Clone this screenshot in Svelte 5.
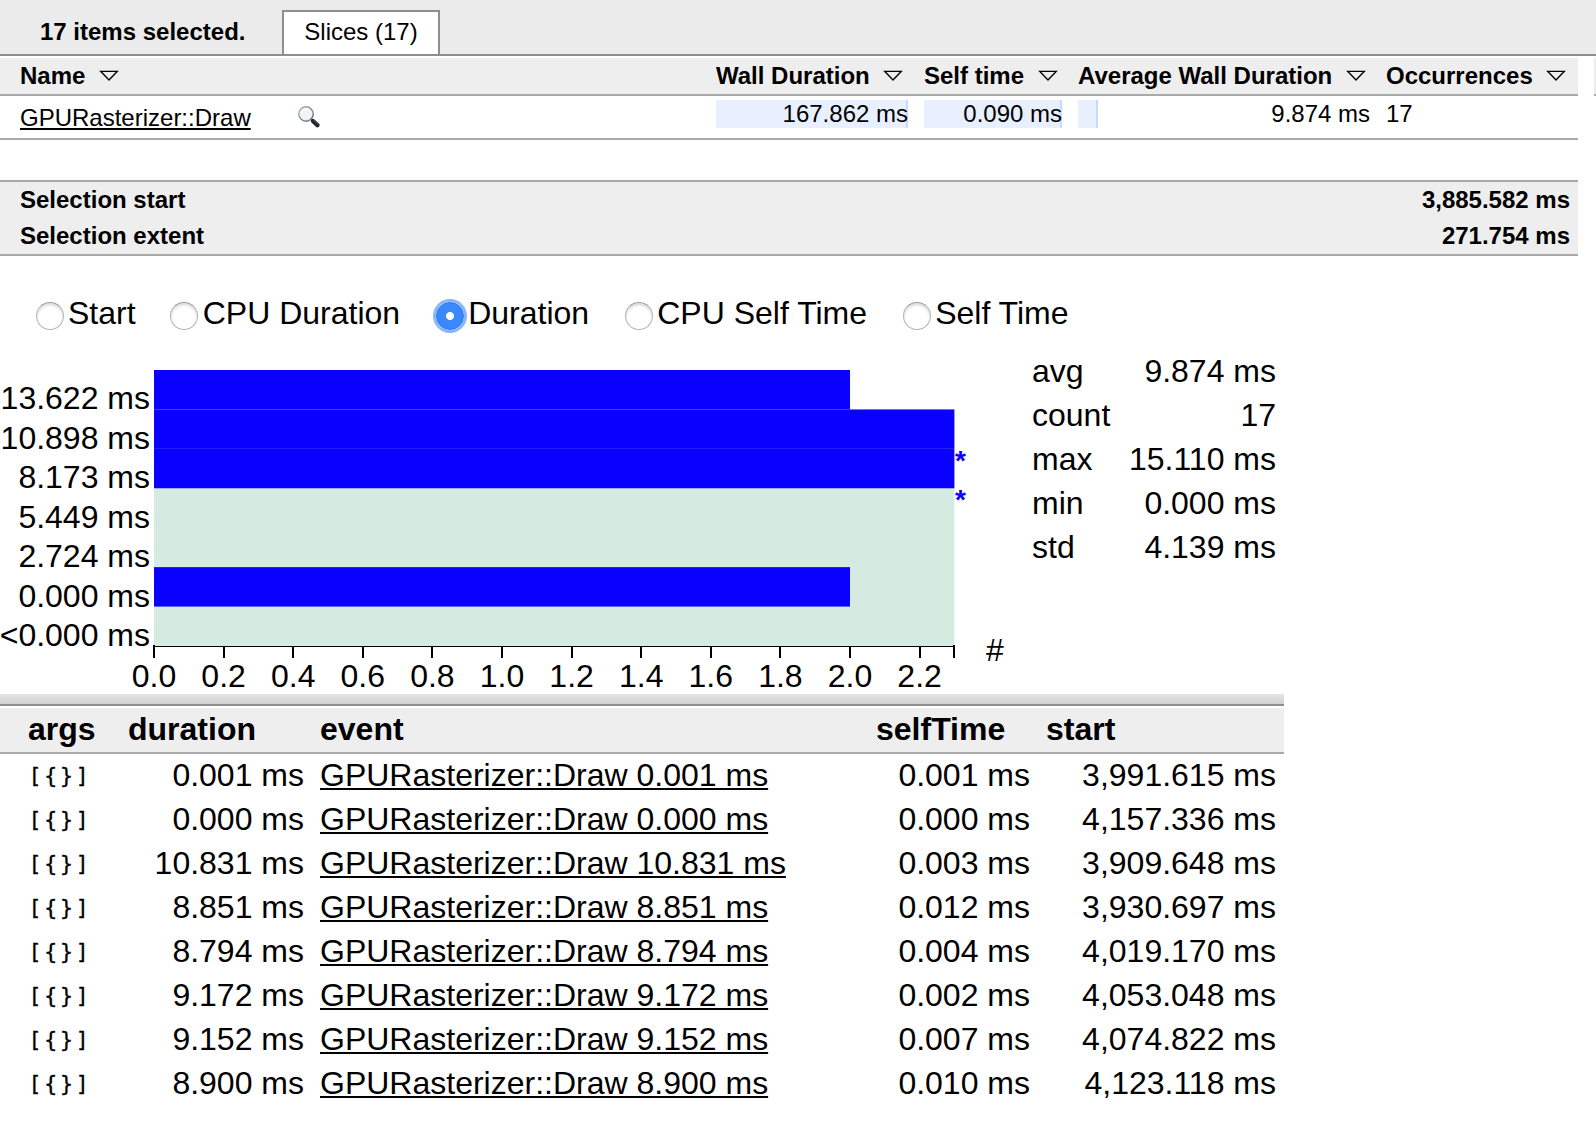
<script lang="ts">
  const headers = ['Name', 'Wall Duration', 'Self time', 'Average Wall Duration', 'Occurrences'];

  const metrics = ['Start', 'CPU Duration', 'Duration', 'CPU Self Time', 'Self Time'];
  let selected = 'Duration';

  const stats = [
    ['avg', '9.874 ms'],
    ['count', '17'],
    ['max', '15.110 ms'],
    ['min', '0.000 ms'],
    ['std', '4.139 ms']
  ];

  // value is the bar length in axis units, over marks a clipped bar
  const bins = [
    { label: '13.622 ms', value: 2, over: false },
    { label: '10.898 ms', value: 2.3, over: true },
    { label: '8.173 ms', value: 2.3, over: true },
    { label: '5.449 ms', value: 0, over: false },
    { label: '2.724 ms', value: 0, over: false },
    { label: '0.000 ms', value: 2, over: false },
    { label: '<0.000 ms', value: 0, over: false }
  ];

  const left = 154;
  const top = 370;
  const unit = 348;
  const step = 39.43;
  const max = 2.3;
  const ticks = Array.from({ length: 12 }, (_, i) => i * 0.2);

  const events = [
    { duration: '0.001 ms', self: '0.001 ms', start: '3,991.615 ms' },
    { duration: '0.000 ms', self: '0.000 ms', start: '4,157.336 ms' },
    { duration: '10.831 ms', self: '0.003 ms', start: '3,909.648 ms' },
    { duration: '8.851 ms', self: '0.012 ms', start: '3,930.697 ms' },
    { duration: '8.794 ms', self: '0.004 ms', start: '4,019.170 ms' },
    { duration: '9.172 ms', self: '0.002 ms', start: '4,053.048 ms' },
    { duration: '9.152 ms', self: '0.007 ms', start: '4,074.822 ms' },
    { duration: '8.900 ms', self: '0.010 ms', start: '4,123.118 ms' }
  ];
</script>

<div class="analysis">
  <div class="tab-strip">
    <span class="tab-label">17 items selected.</span>
    <div class="tab">Slices (17)</div>
  </div>

  <div class="upper">
    <div class="summary">
      <div class="grid head">
        {#each headers as header}
          <div class="th">
            {header}
            <svg class="arrow" width="20" height="12" viewBox="0 0 20 12">
              <path d="M1.8 1.4H18.2L10 9.9Z" fill="none" stroke="#000" stroke-width="1.4" />
            </svg>
          </div>
        {/each}
      </div>

      <div class="grid row">
        <div class="name">
          <span class="link">GPURasterizer::Draw</span>
          <svg class="lens" width="24" height="24" viewBox="0 0 24 24">
            <defs>
              <linearGradient id="rim" x1="0" y1="0" x2="1" y2="1">
                <stop offset="0" stop-color="#9dbbd0" />
                <stop offset="1" stop-color="#666" />
              </linearGradient>
            </defs>
            <path d="M14 14L16 16" stroke="#777" stroke-width="2" />
            <path d="M16 16L20.4 20.2" stroke="#202426" stroke-width="4.4" stroke-linecap="round" />
            <path d="M16.6 15L20.8 19" stroke="#6b7074" stroke-width="0.8" />
            <circle cx="9" cy="9" r="7.2" fill="#f1f3f4" stroke="url(#rim)" stroke-width="1.4" />
            <path d="M4.5 8A5 5 0 0 1 12 4.8" fill="none" stroke="#fff" stroke-width="1.5" />
          </svg>
        </div>
        <div class="value full">167.862 ms</div>
        <div class="value full">0.090 ms</div>
        <div class="value part">9.874 ms</div>
        <div class="value count">17</div>
      </div>

      <div class="selection">
        <div><span>Selection start</span><span>3,885.582 ms</span></div>
        <div><span>Selection extent</span><span>271.754 ms</span></div>
      </div>
    </div>
    <div class="next-column"></div>
  </div>

  <div class="metrics">
    {#each metrics as metric}
      <label>
        <input type="radio" name="metric" value={metric} bind:group={selected} />
        <span>{metric}</span>
      </label>
    {/each}
  </div>

  <div class="middle">
    <svg class="chart" width="1032" height="344" viewBox="0 350 1032 344">
      <rect x={left} y={top + 3 * step} width={max * unit} height={4 * step} fill="#d5ebe2" />
      {#each bins as bin, i}
        {#if bin.value}
          <rect x={left} y={top + i * step} width={bin.value * unit} height={step} fill="#0a00ff" />
        {/if}
        <text x="150" y={top - 0.2 + (i + 1) * (step + 0.05)} text-anchor="end">{bin.label}</text>
        {#if bin.over}
          <text class="star" x="955" y={top + (i + 1) * step + 21}>*</text>
        {/if}
      {/each}
      <path class="axis" d="M154 646.5H954" stroke-width="1" />
      <path class="axis" d="M154 645V658M954 645V658" stroke-width="2" />
      {#each ticks as tick}
        <path class="axis" d="M{Math.round(154 + tick * unit)} 647V658" stroke-width="2" />
        <text x={154 + tick * unit} y="687" text-anchor="middle">{tick.toFixed(1)}</text>
      {/each}
      <text x="986" y="661">#</text>
    </svg>

    <div class="stats">
      {#each stats as [key, value]}
        <div><span>{key}</span><span>{value}</span></div>
      {/each}
    </div>
  </div>

  <div class="events">
    <div class="drag-handle"></div>
    <div class="event-grid event-head">
      <div>args</div>
      <div>duration</div>
      <div>event</div>
      <div>selfTime</div>
      <div>start</div>
    </div>
    {#each events as event}
      <div class="event-grid">
        <div class="args">[&#123;&#125;]</div>
        <div class="num">{event.duration}</div>
        <div class="event"><span class="link">GPURasterizer::Draw {event.duration}</span></div>
        <div class="num">{event.self}</div>
        <div class="num">{event.start}</div>
      </div>
    {/each}
  </div>
</div>

<style>
  :global(body) {
    background: #fff;
  }

  .analysis {
    width: 1596px;
    height: 1132px;
    overflow: hidden;
    font-family: 'Liberation Sans', Arial, sans-serif;
    font-size: 24px;
    line-height: 35px;
    color: #000;
    white-space: nowrap;
  }

  .tab-strip {
    display: flex;
    align-items: flex-end;
    box-sizing: border-box;
    height: 56px;
    padding-left: 40px;
    background: #ebebeb;
    border-bottom: 2px solid #8e8e8e;
  }

  .tab-label {
    width: 242px;
    padding-bottom: 5px;
    font-weight: bold;
  }

  .tab {
    box-sizing: border-box;
    width: 158px;
    height: 44px;
    padding-top: 2px;
    text-align: center;
    background: #fff;
    border: 2px solid #8e8e8e;
    border-bottom: none;
  }

  .upper {
    display: flex;
    gap: 16px;
    margin-top: 2px;
  }

  .summary {
    width: 1578px;
    flex: none;
  }

  .next-column {
    width: 2px;
    height: 36px;
    background: #eee;
    border-bottom: 2px solid #aaa;
  }

  .grid {
    display: grid;
    grid-template-columns: 680px 192px 138px 292px 184px;
    column-gap: 16px;
    box-sizing: border-box;
    padding-left: 20px;
    border-bottom: 2px solid #aaa;
  }

  .grid.head {
    height: 38px;
    background: #eee;
    font-weight: bold;
  }

  .grid.row {
    height: 44px;
    padding-top: 4px;
  }

  .th {
    display: flex;
  }

  .arrow {
    margin: 12px 0 0 13.5px;
  }

  .name {
    display: flex;
  }

  .link {
    text-decoration: underline;
    text-decoration-thickness: 2px;
    text-underline-offset: 2px;
    text-decoration-skip-ink: none;
  }

  .lens {
    margin: 5px 0 0 46px;
  }

  .value {
    height: 28px;
    line-height: 28px;
    text-align: right;
  }

  .full {
    background: linear-gradient(to left, #c2dbff 2px, #e8f0ff 2px);
  }

  .part {
    background: linear-gradient(to right, #e8f0ff 18px, #c2dbff 18px, #c2dbff 20px, transparent 20px);
  }

  .count {
    text-align: left;
  }

  .selection {
    margin-top: 40px;
    background: #eee;
    border-top: 2px solid #aaa;
    border-bottom: 2px solid #aaa;
    font-weight: bold;
  }

  .selection div {
    display: flex;
    justify-content: space-between;
    height: 36px;
    padding: 0 8px 0 20px;
  }

  .metrics {
    display: flex;
    gap: 35.5px;
    box-sizing: border-box;
    height: 94px;
    padding: 36px 0 0 36px;
    font-size: 32px;
    line-height: 42px;
  }

  .metrics label {
    display: flex;
    gap: 4px;
  }

  .metrics label:first-child {
    margin-right: -1px;
  }

  .metrics input {
    appearance: none;
    width: 28px;
    height: 28px;
    margin: 10px 0 0;
    border: 1px solid #b4b4b4;
    border-top-color: #a0a0a0;
    border-radius: 50%;
    background: #fff;
    box-shadow: inset 0 2px 3px rgba(0, 0, 0, 0.16);
  }

  .metrics input:checked {
    border-color: #1e74f2;
    background: radial-gradient(circle, #fff 3.6px, #3b88fd 4.4px);
    box-shadow: 0 0 0 3px #8bb5fa;
  }

  .metrics label:nth-child(n + 2) {
    gap: 4.6px;
  }

  .middle {
    display: flex;
    font-size: 32px;
  }

  .chart {
    display: block;
    flex: none;
  }

  .axis {
    fill: none;
    stroke: #000;
  }

  .star {
    fill: #0a00ff;
    font-size: 28px;
    font-weight: bold;
  }

  .stats {
    width: 244px;
    line-height: 42px;
  }

  .stats div {
    display: flex;
    justify-content: space-between;
    height: 44px;
  }

  .events {
    width: 1284px;
    font-size: 32px;
    line-height: 42px;
  }

  .drag-handle {
    height: 10px;
    background: linear-gradient(#e5e5e5, #d1d1d1);
    border-bottom: 2px solid #8e8e8e;
    margin-bottom: 2px;
  }

  .event-grid {
    display: grid;
    grid-template-columns: 84px 176px 540px 154px 230px;
    column-gap: 16px;
    height: 44px;
    padding-left: 28px;
  }

  .event-head {
    background: #eee;
    border-bottom: 2px solid #aaa;
    font-weight: bold;
  }

  .num {
    text-align: right;
  }

  .args {
    padding-left: 0.5px;
    font-family: 'DejaVu Sans Mono', monospace;
    font-size: 21.5px;
    letter-spacing: 2.8px;
    line-height: 43px;
    -webkit-text-stroke: 0.3px #000;
  }
</style>
